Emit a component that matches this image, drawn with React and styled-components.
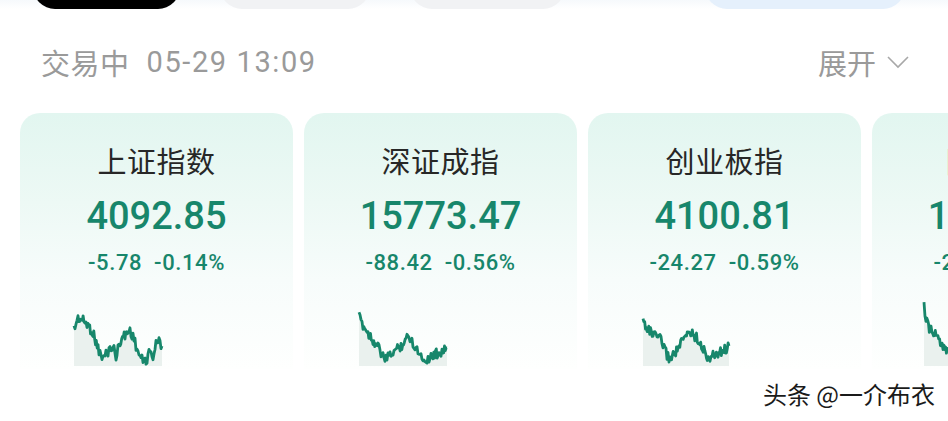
import React from "react";
import styled, { createGlobalStyle } from "styled-components";

const Global = createGlobalStyle`
  html, body { margin: 0; padding: 0; background: #ffffff; }
  body { width: 948px; height: 421px; overflow: hidden; font-family: Roboto, "Noto Sans CJK SC", sans-serif; }
  #root { position: relative; width: 948px; height: 421px; overflow: hidden; }
`;

const Page = styled.div`
  position: relative;
  width: 948px;
  height: 421px;
  background: #ffffff;
  display: flex;
  flex-direction: column;
`;

const TabStrip = styled.div`
  height: 9px;
  overflow: hidden;
  display: flex;
  align-items: flex-end;
  padding-left: 33px;
  gap: 40px;
  background: linear-gradient(180deg, #f6f9fc 0%, #ffffff 100%);
`;

const Tab = styled.div`
  flex: none;
  width: ${(p) => p.$w}px;
  height: 44px;
  margin-left: ${(p) => p.$ml || 0}px;
  border-radius: 0 0 22px 22px;
  background: ${(p) => p.$bg};
`;

const Header = styled.div`
  margin-top: 36px;
  height: 34px;
  padding: 0 38px 0 41px;
  display: flex;
  align-items: center;
  justify-content: space-between;
  color: #9a9a9a;
  font-size: 29px;
`;

const Status = styled.div`
  display: flex;
  align-items: center;
  gap: 17px;
`;

const Cn = styled.span`
  font-family: "Noto Sans CJK SC", sans-serif;
  letter-spacing: 0.5px;
`;

const Time = styled.span`
  font-family: Roboto, sans-serif;
  font-size: 29px;
  letter-spacing: 1.6px;
`;

const Expand = styled.div`
  display: flex;
  align-items: center;
  gap: 10px;
  font-family: "Noto Sans CJK SC", sans-serif;
`;

const CardRow = styled.div`
  margin-top: 34px;
  padding-left: 20px;
  display: flex;
  gap: 11px;
  overflow: hidden;
`;

const Card = styled.div`
  flex: none;
  width: 273px;
  height: 256px;
  border-radius: 20px 20px 0 0;
  background: linear-gradient(180deg, #e2f6f0 0%, #edf9f5 35%, #f7fcfb 65%, #fefffe 100%);
  display: flex;
  flex-direction: column;
  align-items: center;
`;

const Title = styled.div`
  margin-top: 27px;
  font-family: "Noto Sans CJK SC", sans-serif;
  font-size: 29px;
  line-height: 40px;
  color: #272727;
  letter-spacing: 0.5px;
`;

const Value = styled.div`
  margin-top: 14px;
  font-family: Roboto, sans-serif;
  font-weight: 500;
  font-size: 38px;
  line-height: 44px;
  color: #17866b;
`;

const Change = styled.div`
  margin-top: 11px;
  display: flex;
  gap: 12px;
  font-family: Roboto, sans-serif;
  font-weight: 500;
  font-size: 22px;
  line-height: 28px;
  color: #17866b;
  letter-spacing: 0.6px;
`;

const ChartBox = styled.div`
  align-self: stretch;
  margin-top: auto;
  height: 60px;
`;

const Watermark = styled.div`
  position: absolute;
  right: 13px;
  bottom: 10px;
  font-family: "Noto Sans CJK SC", sans-serif;
  font-size: 24px;
  color: #1a1a1a;
  text-shadow: 1px 1px 0 #ffffff, -1px -1px 0 #ffffff;
`;

function noise(i, seed) {
  const v = Math.sin(i * 12.9898 + seed * 78.233) * 43758.5453;
  return v - Math.floor(v) - 0.5;
}

function buildPath(keys, seed) {
  const pts = [];
  for (let k = 0; k < keys.length - 1; k++) {
    const [x0, y0] = keys[k];
    const [x1, y1] = keys[k + 1];
    const steps = Math.max(1, Math.round((x1 - x0) / 0.9));
    for (let s = 0; s < steps; s++) {
      const t = s / steps;
      const x = x0 + (x1 - x0) * t;
      const y = y0 + (y1 - y0) * t + noise(pts.length, seed) * 10;
      pts.push([x, y]);
    }
  }
  pts.push(keys[keys.length - 1]);
  return pts;
}

function Spark({ keys, seed, top }) {
  const pts = buildPath(keys, seed);
  const line = pts.map((p, i) => `${i ? "L" : "M"}${p[0].toFixed(1)} ${(p[1] - top).toFixed(1)}`).join(" ");
  const lastX = pts[pts.length - 1][0];
  const firstX = pts[0][0];
  const area = `${line} L${lastX.toFixed(1)} 57 L${firstX.toFixed(1)} 57 Z`;
  return (
    <svg width="273" height="60" viewBox="0 0 273 60" style={{ display: "block", overflow: "visible" }}>
      <path d={area} fill="#eaf1ee" />
      <path d={line} fill="none" stroke="#17876b" strokeWidth="2.8" strokeLinejoin="round" />
    </svg>
  );
}

const TOP = 310;

const cards = [
  {
    name: "上证指数",
    value: "4092.85",
    chg: "-5.78",
    pct: "-0.14%",
    left: 20,
    seed: 1,
    keys: [[74, 330], [78, 319], [84, 322], [88, 326], [93, 334], [98, 349], [102, 360], [106, 355], [110, 350], [113, 347], [116, 358], [120, 342], [125, 336], [130, 331], [134, 340], [138, 353], [142, 361], [146, 362], [150, 352], [153, 358], [156, 345], [159, 342], [162, 347]],
  },
  {
    name: "深证成指",
    value: "15773.47",
    chg: "-88.42",
    pct: "-0.56%",
    left: 303,
    seed: 2,
    keys: [[358, 318], [362, 326], [367, 334], [372, 341], [377, 348], [381, 356], [385, 361], [389, 356], [393, 352], [400, 347], [405, 340], [408, 337], [412, 344], [416, 350], [420, 357], [424, 361], [428, 359], [432, 356], [437, 354], [441, 352], [446, 349]],
  },
  {
    name: "创业板指",
    value: "4100.81",
    chg: "-24.27",
    pct: "-0.59%",
    left: 587,
    seed: 3,
    keys: [[642, 322], [647, 330], [652, 336], [656, 338], [660, 341], [664, 351], [668, 360], [673, 355], [678, 348], [683, 340], [688, 332], [693, 336], [698, 341], [703, 352], [708, 360], [712, 357], [717, 354], [722, 352], [728, 347]],
  },
  {
    name: "国证2000",
    value: "10205.33",
    chg: "-20.11",
    pct: "-0.20%",
    left: 871,
    seed: 4,
    keys: [[923, 306], [925, 322], [930, 332], [936, 338], [942, 346], [948, 352], [960, 350]],
  },
];

export default function App() {
  return (
    <Page>
      <Global />
      <TabStrip>
        <Tab $w={147} $bg="#000000" />
        <Tab $w={150} $bg="#f1f2f4" />
        <Tab $w={155} $bg="#f1f2f4" />
        <Tab $w={200} $ml={100} $bg="#e5f0fc" />
      </TabStrip>
      <Header>
        <Status>
          <Cn>交易中</Cn>
          <Time>05-29 13:09</Time>
        </Status>
        <Expand>
          <span>展开</span>
          <svg width="24" height="14" viewBox="0 0 24 14">
            <polyline points="2,2 12,12 22,2" fill="none" stroke="#a8a8a8" strokeWidth="1.6" />
          </svg>
        </Expand>
      </Header>
      <CardRow>
        {cards.map((c) => (
          <Card key={c.name}>
            <Title>{c.name}</Title>
            <Value>{c.value}</Value>
            <Change>
              <span>{c.chg}</span>
              <span>{c.pct}</span>
            </Change>
            <ChartBox>
              <Spark keys={c.keys.map(([x, y]) => [x - c.left, y])} seed={c.seed} top={TOP} />
            </ChartBox>
          </Card>
        ))}
      </CardRow>
      <Watermark>头条 @一介布衣</Watermark>
    </Page>
  );
}
